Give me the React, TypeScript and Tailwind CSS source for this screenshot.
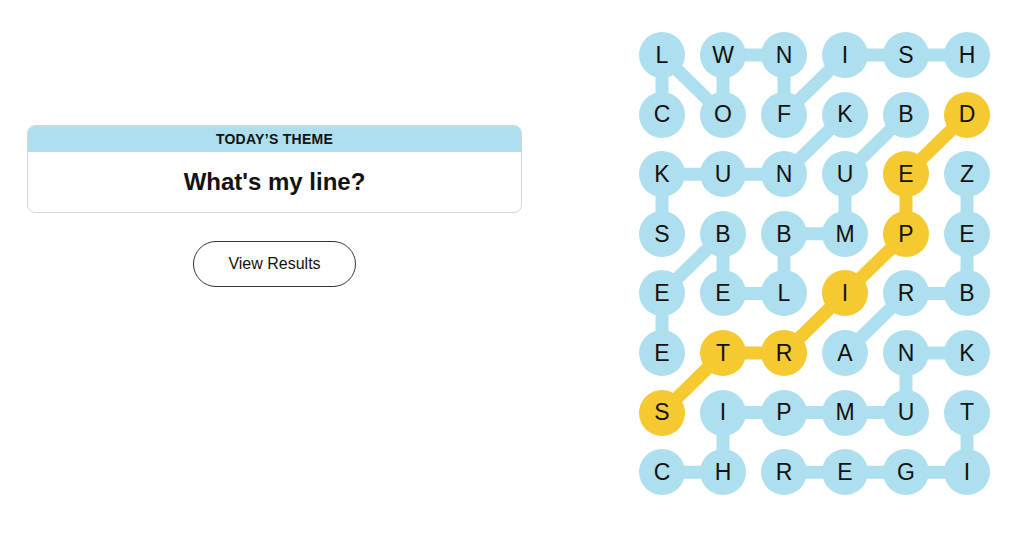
import React from "react";

const board = [
  "LWNISH",
  "COFKBD",
  "KUNUEZ",
  "SBBMPE",
  "EELIRB",
  "ETRANK",
  "SIPMUT",
  "CHREGI",
];

// spangram cells (row-col)
const found = new Set(["1-5", "2-4", "3-4", "4-3", "5-2", "5-1", "6-0"]);

type Edge = [number, number, number, number];

const blueEdges: Edge[] = [
  [0, 1, 0, 2],
  [0, 3, 0, 4],
  [0, 4, 0, 5],
  [0, 0, 1, 0],
  [0, 0, 1, 1],
  [0, 1, 1, 1],
  [0, 2, 1, 2],
  [0, 3, 1, 2],
  [1, 3, 2, 2],
  [1, 4, 2, 3],
  [2, 0, 2, 1],
  [2, 1, 2, 2],
  [2, 0, 3, 0],
  [2, 3, 3, 3],
  [2, 5, 3, 5],
  [3, 2, 3, 3],
  [3, 1, 4, 0],
  [3, 1, 4, 1],
  [3, 2, 4, 2],
  [3, 5, 4, 5],
  [4, 1, 4, 2],
  [4, 4, 4, 5],
  [4, 0, 5, 0],
  [4, 4, 5, 3],
  [5, 4, 5, 5],
  [5, 4, 6, 4],
  [6, 1, 6, 2],
  [6, 2, 6, 3],
  [6, 3, 6, 4],
  [6, 1, 7, 1],
  [6, 5, 7, 5],
  [7, 0, 7, 1],
  [7, 2, 7, 3],
  [7, 3, 7, 4],
  [7, 4, 7, 5],
];

const yellowEdges: Edge[] = [
  [1, 5, 2, 4],
  [2, 4, 3, 4],
  [3, 4, 4, 3],
  [4, 3, 5, 2],
  [5, 2, 5, 1],
  [5, 1, 6, 0],
];

const cx = (c: number) => 23 + c * 61;
const cy = (r: number) => 23 + r * 59.6;

function Lines({ edges, color }: { edges: Edge[]; color: string }) {
  return (
    <>
      {edges.map(([r1, c1, r2, c2], i) => (
        <line
          key={i}
          x1={cx(c1)}
          y1={cy(r1)}
          x2={cx(c2)}
          y2={cy(r2)}
          stroke={color}
          strokeWidth={13}
        />
      ))}
    </>
  );
}

function Board() {
  return (
    <div className="relative">
      <svg className="absolute inset-0" width={352} height={464}>
        <Lines edges={blueEdges} color="#aedfee" />
        <Lines edges={yellowEdges} color="#f6c931" />
      </svg>
      <div className="relative grid grid-cols-[repeat(6,46px)] grid-rows-[repeat(8,46px)] gap-x-[15px] gap-y-[13.6px]">
        {board.map((row, r) =>
          row.split("").map((ch, c) => (
            <div
              key={r + "-" + c}
              className={
                "w-[46px] h-[46px] rounded-full flex items-center justify-center text-[23px] text-[#121212] " +
                (found.has(r + "-" + c) ? "bg-[#f6c931]" : "bg-[#aedfee]")
              }
            >
              {ch}
            </div>
          ))
        )}
      </div>
    </div>
  );
}

export default function App() {
  return (
    <div className="w-[1024px] h-[538px] bg-white flex font-['Liberation_Sans',Arial,sans-serif] text-[#121212]">
      <div className="w-[549px] pt-[125px] px-[27px] flex flex-col items-center">
        <div className="w-full border border-[#d6d6d6] rounded-lg overflow-hidden">
          <div className="h-[26px] bg-[#aedfee] flex items-center justify-center text-[14px] font-semibold uppercase tracking-[0.02em]">
            Today’s Theme
          </div>
          <div className="h-[60px] flex items-center justify-center text-[24px] font-bold">
            What's my line?
          </div>
        </div>
        <button className="mt-[28px] w-[163px] h-[46px] rounded-full border border-[#333] text-[16px] bg-white">
          View Results
        </button>
      </div>
      <div className="ml-[90px] pt-[32px]">
        <Board />
      </div>
    </div>
  );
}
